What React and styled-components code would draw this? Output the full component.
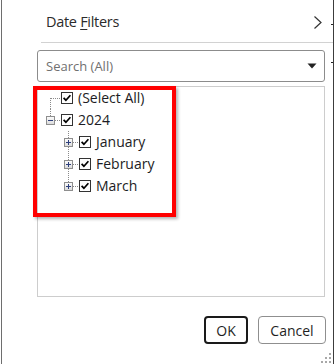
import styled, { createGlobalStyle } from "styled-components";

const Global = createGlobalStyle`
  html, body {
    margin: 0;
    padding: 0;
    background: #fff;
  }
  body {
    font-family: "Open Sans", "Noto Sans", sans-serif;
  }
`;

const Frame = styled.div`
  position: relative;
  box-sizing: border-box;
  width: 333px;
  height: 364px;
  margin-left: 1px;
  border-left: 1px solid #6e6e6e;
  border-right: 1px solid #3c3c3c;
  padding: 0 8px 0 35px;
  overflow: hidden;
`;

const Tick = styled.div`
  position: absolute;
  right: -4px;
  top: ${(p) => p.y}px;
  width: 6px;
  height: 1px;
  background: #222;
`;

const TitleRow = styled.div`
  height: 42px;
  box-sizing: border-box;
  padding: 12px 2px 0 9px;
  display: flex;
  justify-content: space-between;
  align-items: flex-start;
`;

const Title = styled.span`
  font-size: 14.5px;
  line-height: 20px;
  color: #2b2b2b;
  letter-spacing: -0.3px;
  u {
    text-decoration: underline;
    text-underline-offset: 2px;
  }
`;

const Separator = styled.div`
  height: 1px;
  margin: 0 -8px 0 4px;
  background: #d2d2d2;
`;

const Search = styled.div`
  box-sizing: border-box;
  margin-top: 7px;
  height: 32px;
  border: 1px solid #8c8c8c;
  border-radius: 3px;
  display: flex;
  align-items: center;
  justify-content: space-between;
  padding: 0 7px 0 8px;
  font-size: 13px;
  color: #707070;
`;

const ListBox = styled.div`
  box-sizing: border-box;
  margin-top: 4px;
  height: 211px;
  border: 1px solid #cdcdcd;
`;

const Row = styled.div`
  height: 22px;
  display: flex;
  align-items: center;
  padding-left: ${(p) => p.indent}px;
  font-size: 14px;
  color: #1c1c24;
`;

const Label = styled.span`
  margin-left: 5px;
  line-height: 22px;
`;

const Buttons = styled.div`
  margin: 19px -1px 0 0;
  display: flex;
  justify-content: flex-end;
  gap: 10px;
`;

const Button = styled.button`
  box-sizing: border-box;
  height: 28px;
  width: ${(p) => (p.primary ? 44 : 68)}px;
  border: ${(p) => (p.primary ? "2px solid #1a1a1a" : "1px solid #8f8f8f")};
  border-radius: 4px;
  background: #fff;
  font-family: inherit;
  font-size: 14px;
  color: #1f1f1f;
  padding: 0;
`;

const Highlight = styled.div`
  position: absolute;
  left: 31px;
  top: 86px;
  width: 143px;
  height: 131px;
  box-sizing: border-box;
  border: 4px solid #ff0000;
  box-shadow: 2px 2px 3px rgba(0, 0, 0, 0.3);
  pointer-events: none;
`;

const Grip = styled.svg`
  position: absolute;
  right: 0;
  bottom: 0;
`;

const Dot = "#a8a8a8";

function Checkbox() {
  return (
    <svg width="12" height="12" viewBox="0 0 12 12">
      <rect x="0.5" y="0.5" width="11" height="11" fill="#fff" stroke="#333" />
      <polyline points="2.6,5.8 4.9,8.2 9.4,3.2" fill="none" stroke="#000" strokeWidth="1.7" />
    </svg>
  );
}

function Gutter({ box, up, down, full }) {
  return (
    <svg width="18" height="22" viewBox="0 0 18 22">
      <g stroke="#8a8a8a" strokeDasharray="1 1" fill="none">
        {up && <line x1="7.5" y1="0" x2="7.5" y2={box ? 7 : 11} />}
        {down && <line x1="7.5" y1="11" x2="7.5" y2="22" />}
        {full && <line x1="7.5" y1="16" x2="7.5" y2="22" />}
        <line x1={box ? 12 : 8} y1="11.5" x2="18" y2="11.5" />
      </g>
      {box && (
        <g>
          <defs>
            <linearGradient id="exp" x1="0" y1="0" x2="0" y2="1">
              <stop offset="0" stopColor="#fdfdfd" />
              <stop offset="1" stopColor="#d9d9d9" />
            </linearGradient>
          </defs>
          <rect x="3.5" y="7.5" width="8" height="8" fill="url(#exp)" stroke="#8e8e8e" />
          <line x1="5" y1="11.5" x2="10" y2="11.5" stroke="#2d3f7c" />
          {box === "plus" && <line x1="7.5" y1="9" x2="7.5" y2="14" stroke="#2d3f7c" />}
        </g>
      )}
    </svg>
  );
}

const rows = [
  { label: "(Select All)", indent: 5, gutter: { down: true } },
  { label: "2024", indent: 5, gutter: { box: "minus", up: true } },
  { label: "January", indent: 23, gutter: { box: "plus", up: true, full: true } },
  { label: "February", indent: 23, gutter: { box: "plus", up: true, full: true } },
  { label: "March", indent: 23, gutter: { box: "plus", up: true } },
];

export default function App() {
  return (
    <>
      <Global />
      <Frame>
        <Tick y={24} />
        <Tick y={62} />
        <TitleRow>
          <Title>
            Date <u>F</u>ilters
          </Title>
          <svg width="10" height="20" viewBox="0 0 10 20">
            <polyline points="1.5,4.5 8,10.5 1.5,16.5" fill="none" stroke="#333" strokeWidth="1.2" />
          </svg>
        </TitleRow>
        <Separator />
        <Search>
          <span>Search (All)</span>
          <svg width="10" height="6" viewBox="0 0 10 6">
            <polygon points="0.5,0.5 9.5,0.5 5,5.5" fill="#222" />
          </svg>
        </Search>
        <ListBox>
          {rows.map((r) => (
            <Row key={r.label} indent={r.indent}>
              <Gutter {...r.gutter} />
              <Checkbox />
              <Label>{r.label}</Label>
            </Row>
          ))}
        </ListBox>
        <Buttons>
          <Button primary>OK</Button>
          <Button>Cancel</Button>
        </Buttons>
        <Highlight />
        <Grip width="12" height="12" viewBox="0 0 12 12">
          <rect x="8" y="1" width="2" height="2" fill={Dot} />
          <rect x="4" y="5" width="2" height="2" fill={Dot} />
          <rect x="8" y="5" width="2" height="2" fill={Dot} />
          <rect x="0" y="9" width="2" height="2" fill={Dot} />
          <rect x="4" y="9" width="2" height="2" fill={Dot} />
          <rect x="8" y="9" width="2" height="2" fill={Dot} />
        </Grip>
      </Frame>
    </>
  );
}
